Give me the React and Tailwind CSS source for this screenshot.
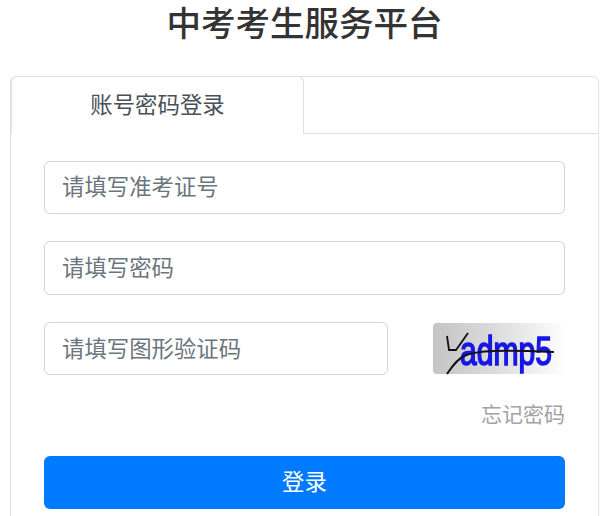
const cjk = { fontFamily: '"Liberation Sans", "Noto Sans CJK SC", sans-serif' };

function Field({ placeholder, className }) {
  return (
    <input
      type="text"
      placeholder={placeholder}
      className={`rounded-md border border-[#ced4da] bg-white px-[17px] text-[22.4px] text-[#495057] outline-none placeholder:text-[#6c757d] ${className}`}
    />
  );
}

function Captcha() {
  return (
    <div className="h-[51px] w-[133px] rounded bg-gradient-to-r from-[#c4c4c4] via-[#dedede] to-white">
      <svg width="133" height="51" viewBox="0 0 133 51" className="overflow-visible">
        <defs>
          <filter id="soft">
            <feGaussianBlur stdDeviation="0.5" />
          </filter>
        </defs>
        <text
          x="27"
          y="42"
          fontFamily="'Liberation Sans', sans-serif"
          fontSize="40"
          fill="#1616e6"
          stroke="#1616e6"
          strokeWidth="1.6"
          textLength="92"
          lengthAdjust="spacingAndGlyphs"
          filter="url(#soft)"
        >
          admp5
        </text>
        <path d="M14 51 C19 44 23 37 31 33 C43 27 71 27 121 29" fill="none" stroke="#111" strokeWidth="2" />
        <path d="M14 13 L16 27 L23 27 L35 10" fill="none" stroke="#111" strokeWidth="1.8" />
      </svg>
    </div>
  );
}

export default function App() {
  return (
    <div className="h-[516px] overflow-hidden bg-white" style={cjk}>
      <h1 className="h-[76px] pt-[1px] text-center text-[34.5px] leading-[46px] font-medium text-[#333]">中考考生服务平台</h1>

      <div className="ml-[10px] h-[480px] w-[589px] rounded-md border border-[#dee2e6]">
        {/* tabs */}
        <div className="flex h-[57px] border-b border-[#dee2e6]">
          <div className="-mt-px -mb-px box-border flex h-[58px] w-[293px] items-center justify-center rounded-t-md border border-b-0 border-[#dee2e6] bg-white text-[22.4px] text-[#495057]">
            账号密码登录
          </div>
        </div>

        <div className="flex flex-col pt-[27px] pr-[32px] pl-[33px]">
          <Field placeholder="请填写准考证号" className="h-[53px] w-[521px] pt-[1px]" />
          <Field placeholder="请填写密码" className="mt-[27px] h-[54px] w-[521px] pt-[2px]" />
          <div className="mt-[27px] flex items-center justify-between">
            <Field placeholder="请填写图形验证码" className="h-[53px] w-[344px] pt-[3px]" />
            <Captcha />
          </div>
          <div className="mt-[24px] pr-[1px] text-right text-[21px] leading-[32px] text-[#a3a3a3]">忘记密码</div>
          <button className="mt-[25px] h-[53px] w-[521px] rounded-md bg-[#007bff] text-[22.4px] text-white">登录</button>
        </div>
      </div>
    </div>
  );
}
